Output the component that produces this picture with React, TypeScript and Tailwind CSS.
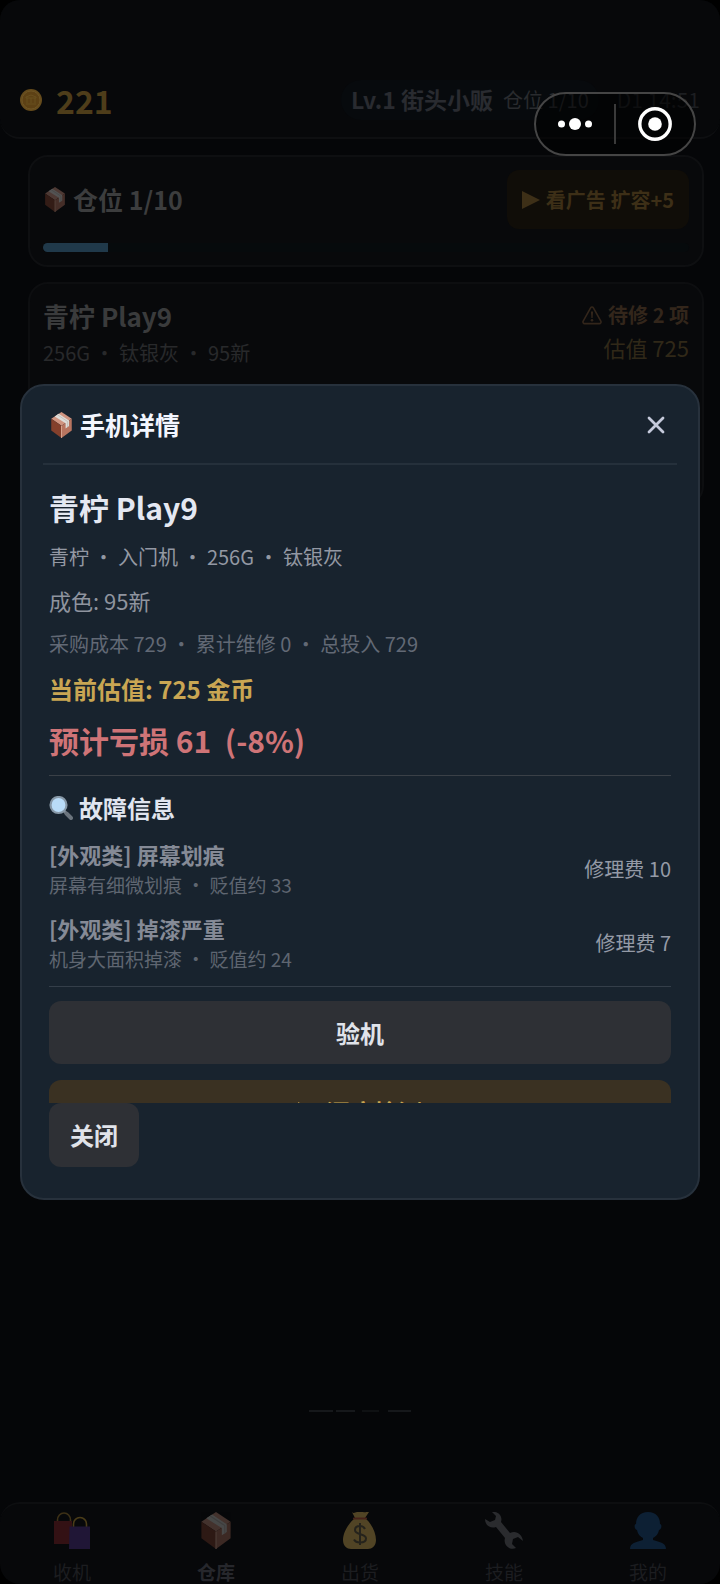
import React from 'react';

interface IconProps {
  className?: string;
}

interface Fault {
  name: string;
  desc: string;
  fee: number;
}

const faults: Fault[] = [
  { name: '[外观类] 屏幕划痕', desc: '屏幕有细微划痕 ・ 贬值约 33', fee: 10 },
  { name: '[外观类] 掉漆严重', desc: '机身大面积掉漆 ・ 贬值约 24', fee: 7 },
];

const BoxIcon: React.FC<IconProps> = ({ className }) => (
  <svg viewBox="0 0 30 38" className={className} aria-hidden="true">
    <path d="M15 0 30 10 15 20 0 10Z" fill="#cf9480" />
    <path d="M0 10 15 20V38L0 27Z" fill="#84402c" />
    <path d="M30 10 15 20V38L30 27Z" fill="#b87560" />
    <path d="M15 20v18" stroke="#e8b39c" strokeWidth="1.2" />
    <path d="M5 6.500 11 2.500 26 12.500v8l-5 3.500v-7.500Z" fill="#dedcd8" />
    <path d="M9 4 24 14v8" fill="none" stroke="#bdb9b4" strokeWidth="1.200" />
  </svg>
);

const CoinIcon: React.FC<IconProps> = ({ className }) => (
  <svg viewBox="0 0 22 22" className={className} aria-hidden="true">
    <circle cx="11" cy="11" r="11" fill="#654b1c" />
    <circle cx="11" cy="11" r="9" fill="#5d4115" stroke="#6e5424" strokeWidth="1" />
    <path d="M6 8l5-2 5 2v1H6ZM7 9v5M11 9v5M15 9v5M6 15h10" fill="none" stroke="#69501f" strokeWidth="1" />
  </svg>
);

const PlayIcon: React.FC<IconProps> = ({ className }) => (
  <svg viewBox="0 0 18 20" className={className} aria-hidden="true">
    <path d="M0 1 18 10 0 19Z" fill="currentColor" />
  </svg>
);

const WarningIcon: React.FC<IconProps> = ({ className }) => (
  <svg viewBox="0 0 20 19" className={className} aria-hidden="true">
    <path
      d="M8.6 1.8a1.6 1.6 0 0 1 2.8 0l7.4 13.4a1.6 1.6 0 0 1-1.4 2.4H2.6a1.6 1.6 0 0 1-1.4-2.4Z"
      fill="none"
      stroke="currentColor"
      strokeWidth="1.6"
    />
    <path d="M8.9 5.5h2.2l-.5 6.5H9.4Z" fill="currentColor" />
    <circle cx="10" cy="14.2" r="1.3" fill="currentColor" />
  </svg>
);

const MagnifierIcon: React.FC<IconProps> = ({ className }) => (
  <svg viewBox="0 0 24 24" className={className} aria-hidden="true">
    <path d="m15 15 2.5 2.5" stroke="#7d8791" strokeWidth="3" />
    <path d="m17.5 17.5 4.5 4.5" stroke="#6b747d" strokeWidth="4" strokeLinecap="round" />
    <circle cx="9.5" cy="9" r="8" fill="#b9dcf8" stroke="#8798a7" strokeWidth="2.2" />
  </svg>
);

const CloseIcon: React.FC<IconProps> = ({ className }) => (
  <svg viewBox="0 0 18 18" className={className} aria-hidden="true">
    <path d="m2 2 14 14M16 2 2 16" stroke="currentColor" strokeWidth="2.8" strokeLinecap="round" />
  </svg>
);

const BagsIcon: React.FC<IconProps> = ({ className }) => (
  <svg viewBox="0 0 36 37" className={className} aria-hidden="true">
    <path d="M3.500 11V8a6.500 7 0 0 1 13 0v3" fill="none" stroke="#3d3016" strokeWidth="1.6" />
    <path d="M0 9h18v23H0Z" fill="#331114" />
    <path d="M19.500 16v-4a6.500 6.500 0 0 1 13 0v4" fill="none" stroke="#4a3c18" strokeWidth="1.6" />
    <path d="M15.500 14.500H36V37H15Z" fill="#201636" />
  </svg>
);

const MoneyBagIcon: React.FC<IconProps> = ({ className }) => (
  <svg viewBox="0 0 36 37" className={className} aria-hidden="true">
    <path d="M10 0c2 2 3 0 5 0s3-1 6 0 4-1 6 0l-4 6c6 5 11 14 11 22 0 6-4 9-8 9H9c-4 0-8-3-8-9C1 20 7 11 13 6Z" fill="#514425" />
    <path d="M12 6.500h12" stroke="#46221a" strokeWidth="2.200" strokeLinecap="round" />
    <path
      d="M23 17c-1-2-3-3-5-3-3 0-5 1.500-5 4 0 5.500 11 3 11 8.500 0 2.500-2.500 4-6 4-3 0-5-1-6-3M18 11v22"
      fill="none"
      stroke="#25231c"
      strokeWidth="2"
    />
  </svg>
);

const WrenchIcon: React.FC<IconProps> = ({ className }) => (
  <svg viewBox="0 0 38 37" className={className} aria-hidden="true">
    <path
      d="M7 0c6-1 11 4 9 10l9 11c6-3 12 1 13 8l-5-4-5 2-1 5 4 4c-7 3-13-4-11-10L11 15C5 17 0 13 0 7l5 3 5-2 1-4Z"
      fill="#2a2b2e"
    />
  </svg>
);

const UserIcon: React.FC<IconProps> = ({ className }) => (
  <svg viewBox="0 0 36 37" className={className} aria-hidden="true">
    <path d="M18 0c8 0 12 5 12 12 2 0 2 5-1 6-1 5-4 7-6 8v2c7 2 13 3 13 9H0c0-6 6-7 13-9v-2c-2-1-5-3-6-8-3-1-3-6-1-6C6 5 10 0 18 0Z" fill="#0d2034" />
  </svg>
);

const tabs = [
  { label: '收机', icon: <BagsIcon className="h-[37px] w-9" /> },
  { label: '仓库', icon: <BoxIcon className="h-[37px] w-[30px] opacity-30" />, active: true },
  { label: '出货', icon: <MoneyBagIcon className="h-[37px] w-9" /> },
  { label: '技能', icon: <WrenchIcon className="h-[37px] w-[38px]" /> },
  { label: '我的', icon: <UserIcon className="h-[37px] w-9" /> },
];

const TopBar: React.FC = () => (
  <header className="flex h-[139px] items-center justify-between rounded-b-[20px] border-b-2 border-[#0e0f11] bg-[#07080a] px-5 pt-[62px]">
    <div className="flex items-center gap-3.5">
      <CoinIcon className="size-[22px]" />
      <span className="text-[32px] leading-10 font-bold text-[#4e3d1a]">221</span>
    </div>
    <div className="flex items-center gap-[18px]">
      <div className="flex h-10 items-center gap-2.5 rounded-full bg-[#070a0d] px-2.5">
        <span className="text-[23px] font-bold text-[#292b30]">Lv.1 街头小贩</span>
        <span className="text-xl text-[#292b2e]">仓位 1/10</span>
      </div>
      <span className="text-[21px] text-[#1c1e21]">D1 14:51</span>
    </div>
  </header>
);

const Capsule: React.FC = () => (
  <div className="fixed top-[92px] right-6 z-20 flex h-16 w-[162px] items-center rounded-full border-2 border-[#454545] bg-black/50">
    <button type="button" aria-label="更多" className="flex flex-1 justify-center">
      <svg viewBox="0 0 36 14" className="h-3.5 w-9">
        <circle cx="4.5" cy="7" r="3.500" fill="#fff" />
        <circle cx="18" cy="7" r="6" fill="#fff" />
        <circle cx="31.500" cy="7" r="3.500" fill="#fff" />
      </svg>
    </button>
    <span className="h-10 w-0.5 bg-[#3a3a3a]" />
    <button type="button" aria-label="退出" className="flex flex-1 justify-center">
      <svg viewBox="0 0 34 34" className="size-[34px]">
        <circle cx="17" cy="17" r="15.200" fill="none" stroke="#fff" strokeWidth="3.400" />
        <circle cx="17" cy="17" r="6.800" fill="#fff" />
      </svg>
    </button>
  </div>
);

const CapacityCard: React.FC = () => {
  const used = 1;
  const total = 10;

  return (
    <section className="rounded-[20px] border-2 border-[#0e0f11] bg-[#08090b] p-[13px]">
      <div className="flex items-center justify-between">
        <h2 className="flex items-center gap-2 px-0.5 text-[25px] font-bold text-[#3c3d3e]">
          <BoxIcon className="h-[25px] w-5 opacity-35" />
          仓位 {used}/{total}
        </h2>
        <button
          type="button"
          className="flex h-[59px] items-center gap-1.5 rounded-xl bg-[#100d08] px-[15px] text-xl font-bold text-[#3d2f17]"
        >
          <PlayIcon className="h-5 w-[18px]" />
          看广告 扩容+5
        </button>
      </div>
      <div className="mt-3.5 h-[9px] overflow-hidden rounded-full bg-[#060a0c]">
        <div className="h-full bg-[#20394a]" style={{ width: `${(used / total) * 100}%` }} />
      </div>
    </section>
  );
};

const PhoneCard: React.FC = () => (
  <section className="flex min-h-[224px] items-start justify-between rounded-[20px] border-2 border-[#0d0e10] bg-[#08090b] px-[13px] py-3.5">
    <div>
      <h3 className="text-[26px] leading-9 font-bold text-[#3a3b3c]">青柠 Play9</h3>
      <p className="text-xl leading-[38px] text-[#28292b]">256G ・ 钛银灰 ・ 95新</p>
    </div>
    <div className="text-right">
      <p className="flex items-center gap-1.5 text-xl leading-[34px] font-bold text-[#33261b]">
        <WarningIcon className="h-[19px] w-5" />
        待修 2 项
      </p>
      <p className="text-[22px] leading-[30px] text-[#302818]">估值 725</p>
    </div>
  </section>
);

const DetailModal: React.FC = () => (
  <div className="fixed inset-0 z-10 flex items-center px-5">
    <div
      role="dialog"
      aria-labelledby="detail-title"
      className="w-full rounded-3xl border-2 border-[#27313c] bg-[#18232e] px-[21px] pb-[31px]"
    >
      <div className="flex h-[79px] items-center justify-between border-b-2 border-[#25303b] px-2">
        <h2 id="detail-title" className="flex items-center gap-2 text-[25px] font-bold text-[#f3f6ff]">
          <BoxIcon className="h-[26px] w-[21px]" />
          手机详情
        </h2>
        <button type="button" aria-label="关闭详情" className="p-1 text-[#c5cadb]">
          <CloseIcon className="size-[18px]" />
        </button>
      </div>

      <div className="max-h-[638px] overflow-y-auto px-1.5 pt-[18px] [scrollbar-width:none]">
        <h3 className="text-[30px] leading-[48px] font-bold text-[#e4e8f2]">青柠 Play9</h3>
        <p className="mt-1 text-xl leading-[44px] text-[#9398a3]">青柠 ・ 入门机 ・ 256G ・ 钛银灰</p>
        <p className="text-[22px] leading-[42px] text-[#8f949f]">成色: 95新</p>
        <p className="text-xl leading-[46px] text-[#626975]">采购成本 729 ・ 累计维修 0 ・ 总投入 729</p>
        <p className="text-2xl leading-[44px] font-bold text-[#c9a653]">当前估值: 725 金币</p>
        <p className="text-[30px] leading-[58px] font-bold whitespace-pre text-[#cf7477]">预计亏损 61  (-8%)</p>

        <div className="mt-1.5 border-t border-[#3a4047] pt-3">
          <h4 className="flex items-center gap-1.5 text-2xl leading-10 font-bold text-[#e0e5ef]">
            <MagnifierIcon className="size-6" />
            故障信息
          </h4>
          <ul className="mt-2.5 flex flex-col gap-3">
            {faults.map((fault) => (
              <li key={fault.name} className="flex items-center justify-between">
                <div>
                  <p className="text-[22px] leading-8 font-bold text-[#858a96]">{fault.name}</p>
                  <p className="text-[19px] leading-[30px] text-[#5f6671]">{fault.desc}</p>
                </div>
                <span className="text-xl text-[#949aa6]">修理费 {fault.fee}</span>
              </li>
            ))}
          </ul>
        </div>

        <div className="mt-3 flex flex-col gap-4 border-t border-[#343e49] pt-3.5">
          <button type="button" className="h-[63px] shrink-0 rounded-xl bg-[#2e3035] text-2xl font-bold text-[#e0e3ea]">
            验机
          </button>
          <button
            type="button"
            className="flex h-[63px] shrink-0 items-center justify-center gap-2 rounded-xl bg-[#3a3122] text-2xl font-bold text-[#c9a653]"
          >
            <PlayIcon className="h-[22px] w-5" />
            深度检测
          </button>
        </div>
      </div>

      <div className="px-1.5">
        <button type="button" className="h-16 rounded-xl bg-[#2e3035] px-[21px] text-2xl font-bold text-[#e0e3ea]">
          关闭
        </button>
      </div>
    </div>
  </div>
);

const TabBar: React.FC = () => (
  <nav className="grid h-[82px] grid-cols-5 overflow-hidden rounded-[20px] border-t-2 border-[#0d0e10] bg-[#07080a] pt-2">
    {tabs.map((tab) => (
      <a
        key={tab.label}
        href="#"
        className={`flex flex-col items-center gap-2 text-[19px] leading-[30px] ${
          tab.active ? 'font-bold text-[#26272c]' : 'text-[#1c1d20]'
        }`}
      >
        {tab.icon}
        {tab.label}
      </a>
    ))}
  </nav>
);

const App: React.FC = () => {
  return (
    <div className="bg-black font-['Noto_Sans_CJK_SC',sans-serif]">
      <div className="flex min-h-screen flex-col overflow-hidden rounded-[20px] bg-[#050608]">
        <TopBar />
        <main className="flex flex-col gap-[15px] pt-4 pr-4 pl-7">
          <CapacityCard />
          <PhoneCard />
        </main>
        <svg viewBox="0 0 102 2" className="mx-auto mt-auto mb-[90px] h-0.5 w-[102px]" aria-hidden="true">
          <path d="M0 1h24M27 1h19M79 1h23" stroke="#292b2e" strokeWidth="1.200" />
          <path d="M53 1h17" stroke="#17191b" strokeWidth="1.200" />
        </svg>
        <TabBar />
      </div>
      <DetailModal />
      <Capsule />
    </div>
  );
};

export default App;
